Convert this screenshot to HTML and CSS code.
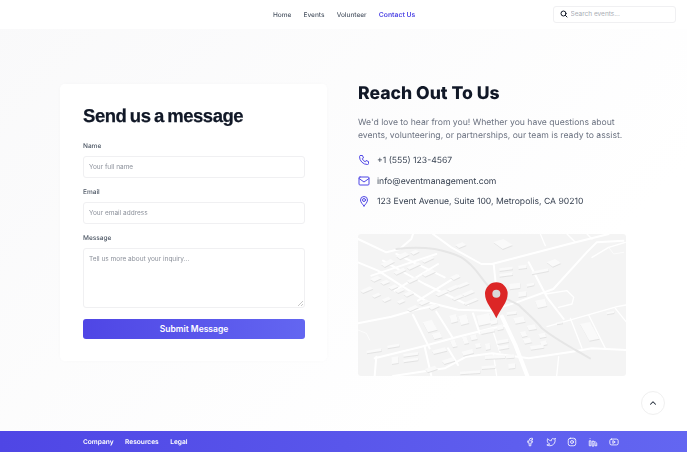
FILE: index.html
```html
<!DOCTYPE html>
<html lang="en">
<head>
    <meta charset="UTF-8">
    <meta name="viewport" content="width=device-width, initial-scale=1.0">
    <title>Contact Us</title>
    <link rel="stylesheet" href="styles.css">
</head>
<body>
    <header class="topbar">
        <nav class="nav">
            <a href="#">Home</a>
            <a href="#">Events</a>
            <a href="#">Volunteer</a>
            <a href="#" class="active">Contact Us</a>
        </nav>
        <div class="search">
            <svg width="8" height="8" viewBox="0 0 24 24" fill="none" stroke="#111827" stroke-width="3" stroke-linecap="round"><circle cx="10.5" cy="10.5" r="7.5"/><path d="M21 21l-5-5"/></svg>
            <input type="text" placeholder="Search events...">
        </div>
    </header>

    <main class="content">
        <section class="card">
            <h1>Send us a message</h1>
            <label for="name">Name</label>
            <input type="text" id="name" placeholder="Your full name">
            <label for="email">Email</label>
            <input type="text" id="email" placeholder="Your email address">
            <label for="message">Message</label>
            <textarea id="message" placeholder="Tell us more about your inquiry..."></textarea>
            <button class="submit">Submit Message</button>
        </section>

        <section class="info">
            <h2>Reach Out To Us</h2>
            <p class="intro">We'd love to hear from you! Whether you have questions about events, volunteering, or partnerships, our team is ready to assist.</p>
            <ul class="contacts">
                <li>
                    <svg width="12" height="12" viewBox="0 0 24 24" fill="none" stroke="#4f46e5" stroke-width="2" stroke-linecap="round" stroke-linejoin="round"><path d="M5 3h4l2 5-2.5 1.500a11 11 0 0 0 6 6L16 13l5 2v4a2 2 0 0 1-2 2A16 16 0 0 1 3 5a2 2 0 0 1 2-2"/></svg>
                    <span>+1 (555) 123-4567</span>
                </li>
                <li>
                    <svg width="12" height="12" viewBox="0 0 24 24" fill="none" stroke="#4f46e5" stroke-width="2" stroke-linecap="round" stroke-linejoin="round"><rect x="2" y="4" width="20" height="16" rx="2"/><path d="M2 7l10 7 10-7"/></svg>
                    <span>info@eventmanagement.com</span>
                </li>
                <li>
                    <svg width="12" height="12" viewBox="0 0 24 24" fill="none" stroke="#4f46e5" stroke-width="2" stroke-linecap="round" stroke-linejoin="round"><circle cx="12" cy="10" r="3"/><path d="M12 22c-2-3-7-7-7-12a7 7 0 0 1 14 0c0 5-5 9-7 12z"/></svg>
                    <span>123 Event Avenue, Suite 100, Metropolis, CA 90210</span>
                </li>
            </ul>
            <svg class="map" width="268" height="142" viewBox="24 15 804 426">
                <defs>
                    <g id="blocks">
                        <path d="M92 105l30-15 12 8-30 16zM138 82l28-13 12 8-28 14zM180 70l18-8 10 6-18 9zM215 95l30-14 8 6-30 14zM170 115l35-15 8 6-35 16zM130 130l30-14 9 7-30 14zM215 135l32-14 10 7-32 15zM170 155l26-12 9 7-26 12zM300 145l20-10 11 8-20 10z"/>
                        <path d="M60 150l22-10 12 8-22 10zM90 160l20-8 10 7-20 8zM30 185l30-13 9 7-30 13zM115 175l20-9 9 7-20 9zM135 185l20-9 9 7-20 9zM65 200l20-9 8 6-20 9zM95 212l20-9 9 7-20 9zM160 195l22-10 10 8-22 10zM140 218l18-8 8 6-18 8zM170 240l26-12 10 7-26 12zM205 222l24-11 10 7-24 11zM235 235l24-11 10 7-24 11z"/>
                        <path d="M255 195l30-14 10 7-30 14zM290 180l28-13 10 7-28 13zM320 170l30-12 8 6-30 12zM305 208l28-12 8 6-28 12zM335 195l30-13 9 7-30 13zM340 222l38-16 7 6-38 16z"/>
                        <path d="M430 40l30-10 28 18-30 12zM315 48l22-8 12 8-22 9zM590 100l25-10 18 12-25 11zM448 118l40-5 0 8-40 5zM448 135l40-5 0 8-40 5zM505 110l25-3 0 10-25 3zM545 128l50-10 0 8-50 10zM478 165l32-4 0 16-32 4zM505 190l24-4 0 14-24 4zM555 215l30-6 6 22-28 6zM530 165l22-4 0 8-22 4z"/>
                        <path d="M218 280l28-8 16 30-28 8zM245 315l24-6 8 16-24 6zM298 260l20-5 6 22-20 5zM325 262l24-6 8 26-24 6zM380 260l38-8 6 30-38 8zM422 275l20-4 0 12-20 4zM470 250l30-4 0 8-30 4zM490 268l30-6 6 16-30 6zM530 290l24-4 6 14-24 4zM510 310l16-4 6 14-16 4zM518 330l22-4 6 14-22 4zM565 315l20-4 4 12-20 4zM570 338l18-4 4 12-18 4zM540 352l40-6 2 10-40 6z"/>
                        <path d="M390 305l40-8 4 10-40 8zM440 290l18-4 2 14-18 4zM440 335l34-6 2 10-34 6zM445 352l30-5 2 10-30 5zM360 320l18-4 4 14-18 4zM300 335l14-3 8 20-14 3zM335 325l14-3 8 20-14 3zM375 345l16-3 2 12-16 3zM405 345l14-3 2 18-14 3zM335 368l32-8 4 12-32 8zM245 365l40-10 6 10-40 10zM275 395l32-10 8 10-32 10z"/>
                        <path d="M690 285l30-6 28 50-30 6zM620 280l18-3 0 6-18 3zM770 250l22-4 0 6-22 4zM50 365l44-7 0 8-44 7zM112 350l36-6 0 8-36 6zM160 375l44-6 0 8-44 6zM160 392l44-6 0 8-44 6zM125 385l20-3 0 20-20 3zM225 420l30-10 8 10-30 10zM405 380l60-3 0 10-60 3zM468 378l24-2 0 10-24 2zM395 412l40-3 0 8-40 3zM475 405l20-2 0 14-20 2zM330 428l60-4 0 8-60 4z"/>
                    </g>
                </defs>
                <rect x="24" y="15" width="804" height="426" fill="#f4f4f4"/>
                <g class="map-base">
                    <g fill="none" stroke="#fff" stroke-linecap="round" stroke-linejoin="round">
                        <path stroke-width="6" d="M24 30l85 40 40-10 35-30 5-15M24 100l60 25 70 45 80 50 90 22 96 3 80-25 110-40 100-110 30-30 80-5M64 140l90-30 105-35M134 185l130-80M204 215l120-75M99 95l125 70 130 63M139 75l145 70"/>
                        <path stroke-width="6" d="M249 15l55 40 90 50 32 0 230-60 120-30M431 105l10 95M536 100l55 105 50 65M24 283l100-20 70-20 70-15M189 258l50 100M74 388l140-35 110-30 102-25 40-8M79 383l-5 58M224 353l20 88M129 441l155-23 65-35 77-10 110 15 130-20 60-10 102 5M259 248l50 80M369 253l20 60M294 358l30 50"/>
                        <path stroke-width="4" d="M591 293l210-60 27-5M661 268l35 90M716 258l50 100M796 238l32 40M571 15l15 35M651 15l25 25M711 15l15 15M586 195l65-10 20 20-5 20-40 10M726 85l50-30 50-15M626 383l-6 58M430 310l20 60M430 373l10 68"/>
                        <path stroke-width="2" d="M24 303l25 10 10 20M776 55l15 20 30-5"/>
                        <path stroke-width="12" d="M456 263l40 85 36 93"/>
                    </g>
                    <path fill="none" stroke="#e6e6e6" stroke-width="6" stroke-linecap="round" d="M139 60c40-5 80-5 115 0 35 7 60 15 80 25 30 18 45 40 60 60 10 15 25 30 32 40 30 20 55 30 80 43 25 25 50 45 70 70 30 25 65 45 100 65 20 10 30 18 44 25"/>
                    <use href="#blocks" fill="#e3e3e3" transform="translate(1 3)"/>
                    <use href="#blocks" fill="#fafafa"/>
                </g>
                <path fill="#dc2626" d="M439 160a34 34 0 0 0-34 34c0 26 22 46 34 74 12-28 34-48 34-74a34 34 0 0 0-34-34z"/>
                <circle cx="439" cy="194" r="12" fill="#d9d9d9"/>
            </svg>
        </section>
    </main>

    <button class="to-top" aria-label="Back to top">
        <svg width="10" height="10" viewBox="0 0 24 24" fill="none" stroke="#1f2937" stroke-width="2.5" stroke-linecap="round" stroke-linejoin="round"><path d="M6 15l6-6 6 6"/></svg>
    </button>

    <footer class="footer">
        <div class="footer-links">
            <a href="#">Company</a>
            <a href="#">Resources</a>
            <a href="#">Legal</a>
        </div>
        <div class="socials">
            <svg width="10" height="10" viewBox="0 0 24 24"><path d="M7 10v4h3v7h4v-7h3l1-4h-4V8a1 1 0 0 1 1-1h3V3h-3a5 5 0 0 0-5 5v2H7"/></svg>
            <svg width="10" height="10" viewBox="0 0 24 24"><path d="M22 4c-1 .5-2 1-3 1a3.500 3.500 0 0 0-6 3v1C9.500 9 6 7 4 4c0 0-4 9 5 13-2 1.300-4 2-7 2 9 5 20 0 20-11.500 0-.3 0-.6-.1-.8C21 6 22 5 22 4z"/></svg>
            <svg width="10" height="10" viewBox="0 0 24 24"><rect x="3" y="3" width="18" height="18" rx="5"/><circle cx="12" cy="12" r="3.500"/><path d="M17 7v.01"/></svg>
            <svg width="10" height="10" viewBox="0 0 24 24"><path d="M3 10v11h4V10zM5 4v.01M10 21V10h4v2a5 5 0 0 1 7 4v5h-4v-5a2 2 0 0 0-3-2v7z"/></svg>
            <svg width="10" height="10" viewBox="0 0 24 24"><rect x="2" y="5" width="20" height="14" rx="4"/><path d="M10 9l5 3-5 3z"/></svg>
        </div>
    </footer>
</body>
</html>
```

FILE: styles.css
```css
* {
    box-sizing: border-box;
}

body {
    margin: 0;
    height: 452px;
    overflow: hidden;
    display: flex;
    flex-direction: column;
    font-family: Inter, "Noto Sans", sans-serif;
    color: #1f2937;
    background: linear-gradient(135deg, #f9f9fa 0%, #ffffff 75%);
    text-rendering: geometricPrecision;
}

a {
    text-decoration: none;
    color: inherit;
}

.topbar {
    height: 29px;
    flex: none;
    background: #fff;
    display: flex;
    align-items: center;
    justify-content: space-between;
    padding: 0 11px 0 273px;
}

.nav {
    display: flex;
    align-items: baseline;
    gap: 12.200px;
    font-size: 6.500px;
    line-height: 9px;
    font-weight: 500;
    color: #4b5563;
    will-change: opacity;
}

.nav .active {
    color: #4f46e5;
    font-size: 6.800px;
    font-weight: 600;
}

.search {
    width: 123px;
    height: 17px;
    margin-top: -1px;
    display: flex;
    align-items: center;
    gap: 2.500px;
    padding: 0 6px;
    background: #fff;
    border: 1px solid #f0f0f2;
    border-radius: 3px;
}

.search input {
    flex: 1;
    min-width: 0;
    padding: 0;
    border: none;
    outline: none;
    font: 6.500px Inter, sans-serif;
}

::placeholder {
    color: #8b909a;
    opacity: 1;
}

.search input::placeholder {
    color: #a8acb3;
}

.content {
    flex: 1;
    display: flex;
    align-items: flex-start;
    gap: 31px;
    padding: 55px 61px 0 60px;
}

.card {
    width: 267px;
    height: 277px;
    flex: none;
    padding: 22px 22px 22px 23px;
    display: flex;
    flex-direction: column;
    background: #fff;
    border-radius: 5px;
    box-shadow: 0 0 4px rgba(0, 0, 0, 0.02);
    will-change: opacity;
}

.card h1 {
    margin: 0 0 16px;
    font-family: "Liberation Sans", Arial, sans-serif;
    font-size: 18.500px;
    line-height: 20px;
    font-weight: 700;
    letter-spacing: -0.45px;
    word-spacing: -1.300px;
    color: #111827;
    -webkit-text-stroke: 0.25px #111827;
}

.card label {
    font-size: 6.500px;
    line-height: 8px;
    font-weight: 500;
    color: #4b5563;
    margin-bottom: 6px;
}

.card input,
.card textarea {
    width: 100%;
    height: 22px;
    margin-bottom: 10px;
    padding: 0 5px;
    border: 1px solid #f0f0f2;
    border-radius: 3px;
    outline: none;
    background: #fff;
    font: 6.500px Inter, sans-serif;
}

.card textarea {
    height: 60px;
    padding: 6px 5px;
    margin-bottom: 11px;
    resize: vertical;
    display: block;
}

.card textarea::-webkit-resizer {
    background: linear-gradient(135deg, transparent 0 55%, #c8c8c8 55% 65%, transparent 65% 80%, #c8c8c8 80% 90%, transparent 90%) no-repeat right 1px bottom 1px / 6px 6px;
}

.submit {
    height: 20px;
    padding: 0;
    border: none;
    border-radius: 3px;
    background: linear-gradient(90deg, #4f46e5, #6366f1);
    color: #fff;
    font: 600 8.500px Inter, sans-serif;
}

.info {
    flex: 1;
    min-width: 0;
    will-change: opacity;
}

.info h2 {
    margin: 0 0 13px;
    font-size: 17.600px;
    line-height: 20px;
    font-weight: 800;
    color: #111827;
}

.intro {
    margin: 0 0 8px;
    font-size: 8.650px;
    line-height: 13px;
    color: #6b7280;
}

.contacts {
    list-style: none;
    margin: 0 0 21px;
    padding: 0;
}

.contacts li {
    height: 20.500px;
    display: flex;
    align-items: center;
    gap: 7px;
    font-size: 8.650px;
    color: #374151;
}

.contacts svg {
    margin-top: -2px;
}

.map {
    display: block;
    border-radius: 3px;
}

.map-base {
    filter: blur(0.3px);
}

.to-top {
    position: absolute;
    left: 641px;
    top: 391px;
    width: 24px;
    height: 24px;
    padding: 0;
    display: flex;
    align-items: center;
    justify-content: center;
    background: #fff;
    border: 1px solid #f0f0f0;
    border-radius: 50%;
}

.footer {
    height: 21px;
    flex: none;
    display: flex;
    align-items: center;
    justify-content: space-between;
    padding: 0 68.500px 0 83px;
    background: linear-gradient(90deg, #4f46e5, #6366f1);
    color: #fff;
}

.footer-links {
    display: flex;
    gap: 11.500px;
    font-size: 6.600px;
    font-weight: 600;
    will-change: opacity;
}

.socials {
    display: flex;
    align-items: center;
    gap: 11px;
}

.socials svg {
    fill: none;
    stroke: #fff;
    stroke-width: 2;
    stroke-linecap: round;
    stroke-linejoin: round;
}
```
